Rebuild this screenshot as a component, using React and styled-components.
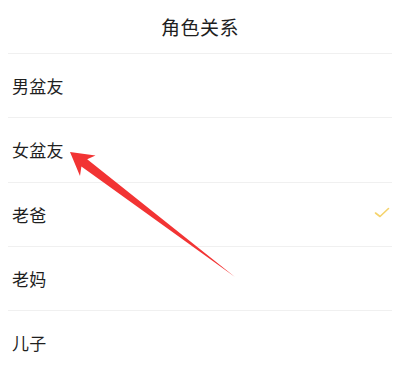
import React from "react";
import styled, { createGlobalStyle } from "styled-components";

const Global = createGlobalStyle`
  html, body { margin: 0; padding: 0; background: #fff; }
  body { font-family: "Noto Sans CJK SC", "Noto Sans", sans-serif; }
`;

const Page = styled.div`
  position: relative;
  width: 407px;
  height: 375px;
  overflow: hidden;
  background: #fff;
`;

const Sheet = styled.div`
  margin: 0 15px 0 8px;
  display: flex;
  flex-direction: column;
`;

const Title = styled.div`
  height: 53px;
  display: flex;
  align-items: center;
  justify-content: center;
  font-size: 19px;
  font-weight: 400;
  color: #1e1e1e;
  letter-spacing: 0.5px;
  border-bottom: 1px solid #f0f0f0;
`;

const Row = styled.div`
  height: 63.3px;
  display: flex;
  align-items: center;
  justify-content: space-between;
  padding: 0 2px 0 4px;
  font-size: 17px;
  font-weight: 400;
  color: #1f1f1f;
  letter-spacing: 0.3px;
  border-bottom: ${(p) => (p.$last ? "none" : "1px solid #f0f0f0")};
`;

const Check = styled.svg`
  width: 16px;
  height: 12px;
  margin-top: -2px;
`;

const Arrow = styled.svg`
  position: absolute;
  left: 0;
  top: 0;
  width: 407px;
  height: 375px;
  pointer-events: none;
`;

const items = ["男盆友", "女盆友", "老爸", "老妈", "儿子"];

export default function App() {
  return (
    <Page>
      <Global />
      <Sheet>
        <Title>角色关系</Title>
        {items.map((t, i) => (
          <Row key={t} $last={i === items.length - 1}>
            <span>{t}</span>
            {t === "老爸" && (
              <Check viewBox="0 0 16 12">
                <polyline
                  points="1.5,6 6,9.5 14.5,1.5"
                  fill="none"
                  stroke="#f5d36b"
                  strokeWidth="1.6"
                  strokeLinecap="round"
                  strokeLinejoin="round"
                />
              </Check>
            )}
          </Row>
        ))}
      </Sheet>
      <Arrow viewBox="0 0 407 375">
        <polygon
          points="70,152 95.5,155.4 87.2,159.2 235,277 81.4,166.6 80,176"
          fill="#f23434"
        />
      </Arrow>
    </Page>
  );
}
